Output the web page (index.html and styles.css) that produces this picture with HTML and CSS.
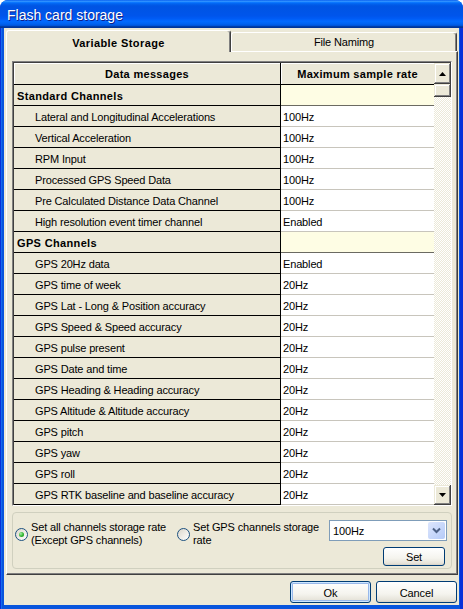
FILE: index.html
```html
<!DOCTYPE html>
<html>
<head>
<meta charset="utf-8">
<link rel="stylesheet" href="styles.css">
</head>
<body>
<div class="window">
  <div class="titlebar"><span>Flash card storage</span></div>
  <div class="client">
    <div class="tabs">
      <div class="tab active">Variable Storage</div>
      <div class="tab">File Namimg</div>
    </div>
    <div class="panel">
      <div class="grid">
        <div class="grid-inner">
          <div class="table">
            <div class="hc c1">Data messages</div><div class="hc c2">Maximum sample rate</div>
            <div class="c1 cat">Standard Channels</div><div class="catv"></div>
            <div class="c1 item">Lateral and Longitudinal Accelerations</div><div class="val">100Hz</div>
            <div class="c1 item">Vertical Acceleration</div><div class="val">100Hz</div>
            <div class="c1 item">RPM Input</div><div class="val">100Hz</div>
            <div class="c1 item">Processed GPS Speed Data</div><div class="val">100Hz</div>
            <div class="c1 item">Pre Calculated Distance Data Channel</div><div class="val">100Hz</div>
            <div class="c1 item">High resolution event timer channel</div><div class="val">Enabled</div>
            <div class="c1 cat">GPS Channels</div><div class="catv"></div>
            <div class="c1 item">GPS 20Hz data</div><div class="val">Enabled</div>
            <div class="c1 item">GPS time of week</div><div class="val">20Hz</div>
            <div class="c1 item">GPS Lat - Long &amp; Position accuracy</div><div class="val">20Hz</div>
            <div class="c1 item">GPS Speed &amp; Speed accuracy</div><div class="val">20Hz</div>
            <div class="c1 item">GPS pulse present</div><div class="val">20Hz</div>
            <div class="c1 item">GPS Date and time</div><div class="val">20Hz</div>
            <div class="c1 item">GPS Heading &amp; Heading accuracy</div><div class="val">20Hz</div>
            <div class="c1 item">GPS Altitude &amp; Altitude accuracy</div><div class="val">20Hz</div>
            <div class="c1 item">GPS pitch</div><div class="val">20Hz</div>
            <div class="c1 item">GPS yaw</div><div class="val">20Hz</div>
            <div class="c1 item">GPS roll</div><div class="val">20Hz</div>
            <div class="c1 item">GPS RTK baseline and baseline accuracy</div><div class="val">20Hz</div>
          </div>
          <div class="scrollbar">
            <div class="sbtn up"><svg width="7" height="4" viewBox="0 0 7 4"><path d="M3.5 0 L7 4 L0 4 Z" fill="#000"/></svg></div>
            <div class="thumb"></div>
            <div class="track"></div>
            <div class="sbtn down"><svg width="7" height="4" viewBox="0 0 7 4"><path d="M0 0 L7 0 L3.5 4 Z" fill="#000"/></svg></div>
          </div>
        </div>
      </div>
      <div class="group">
        <div class="option opt1">
          <span class="radio on"></span>
          <span class="label">Set all channels storage rate<br>(Except GPS channels)</span>
        </div>
        <div class="option opt2">
          <span class="radio"></span>
          <span class="label">Set GPS channels storage<br>rate</span>
        </div>
        <div class="rightcol">
          <div class="combo">
            <span class="combo-text">100Hz</span>
            <span class="dd"><svg width="9" height="7" viewBox="0 0 9 7"><path d="M1 1.5 L4.5 5 L8 1.5" fill="none" stroke="#4D6185" stroke-width="2"/></svg></span>
          </div>
          <div class="btn setbtn">Set</div>
        </div>
      </div>
    </div>
    <div class="buttons">
      <div class="btn okbtn">Ok</div>
      <div class="btn">Cancel</div>
    </div>
  </div>
</div>
</body>
</html>
```

FILE: styles.css
```css
html, body {
  margin: 0;
  padding: 0;
  background: #ffffff;
}
body {
  font-family: "Liberation Sans", Arial, sans-serif;
  font-size: 11px;
  color: #000;
  letter-spacing: -0.15px;
}
.window {
  width: 463px;
  height: 609px;
  box-sizing: border-box;
  display: flex;
  flex-direction: column;
  border-radius: 8px 8px 0 0;
  overflow: hidden;
  background: linear-gradient(to right, #0831D9 0, #0831D9 1px, #166AEE 1px, #166AEE 2px, #0855DD 2px, #0855DD 460px, #0831D9 460px);
}
.titlebar {
  height: 28px;
  flex: none;
  box-sizing: border-box;
  padding: 1px 0 0 7px;
  display: flex;
  align-items: center;
  color: #fff;
  font-size: 14px;
  letter-spacing: 0;
  text-shadow: 1px 1px 0 #0F1F89;
  background: linear-gradient(to bottom, #0058EE 0%, #3593FF 4%, #288EFF 6%, #127DFF 8%, #036FFC 10%, #0262EE 14%, #0057E5 20%, #0054E3 24%, #0055EB 56%, #005BF5 66%, #026AFE 76%, #0062EF 86%, #0052D6 92%, #0040AB 94%, #003092 100%);
}
.client {
  flex: 1;
  margin: 0 4px 4px 4px;
  background: #ECE9D8;
  display: flex;
  flex-direction: column;
  padding: 2px 1px 0 2px;
}
.tabs {
  height: 21px;
  display: flex;
  align-items: flex-end;
  position: relative;
  z-index: 2;
}
.tab {
  box-sizing: border-box;
  height: 19px;
  width: 226px;
  border: 1px solid #fff;
  border-right-color: #404040;
  border-bottom: none;
  border-radius: 3px 3px 0 0;
  box-shadow: inset -1px 0 0 #808080;
  text-align: center;
  line-height: 18px;
  background: #ECE9D8;
}
.tab.active {
  width: 225px;
  height: 22px;
  margin-bottom: -1px;
  font-weight: bold;
  line-height: 24px;
  letter-spacing: 0.4px;
}
.panel {
  box-sizing: border-box;
  height: 524px;
  border: 1px solid #fff;
  border-right-color: #404040;
  border-bottom-color: #404040;
  box-shadow: inset -1px -1px 0 #808080;
  padding: 9px 5px 5px 5px;
  display: flex;
  flex-direction: column;
}
.grid {
  box-sizing: border-box;
  height: 445px;
  border: 1px solid #808080;
  border-right-color: #fff;
  border-bottom-color: #fff;
}
.grid-inner {
  height: 100%;
  box-sizing: border-box;
  border-top: 1px solid #404040;
  border-left: 1px solid #404040;
  display: flex;
  background: #fff;
}
.table {
  display: grid;
  grid-template-columns: 267px 153px;
  grid-template-rows: 22px;
  grid-auto-rows: 21px;
  align-content: start;
}
.table > div {
  box-sizing: border-box;
  white-space: nowrap;
  overflow: hidden;
  line-height: 22px;
}
.c1 {
  background: #ECE9D8;
  border-right: 1px solid #000;
  border-bottom: 1px solid #000;
}
.hc {
  background: #ECE9D8;
  font-weight: bold;
  text-align: center;
  letter-spacing: 0.3px;
  border-bottom: 1px solid #000;
  box-shadow: inset 1px 1px 0 #fff;
}
.cat {
  font-weight: bold;
  letter-spacing: 0.35px;
  padding-left: 3px;
}
.item {
  padding-left: 21px;
}
.val {
  background: #fff;
  border-bottom: 1px solid #C8C5BC;
  padding-left: 2px;
}
.catv {
  background: #FEFDE4;
  border-bottom: 1px solid #6B6A62;
}
.scrollbar {
  width: 17px;
  display: flex;
  flex-direction: column;
  background: repeating-conic-gradient(#ffffff 0 25%, #ECE9D8 0 50%) 0 0 / 2px 2px;
}
.sbtn, .thumb {
  box-sizing: border-box;
  background: #ECE9D8;
  box-shadow: inset -1px -1px 0 #404040, inset 1px 1px 0 #ECE9D8, inset -2px -2px 0 #808080, inset 2px 2px 0 #ffffff;
  display: flex;
  align-items: center;
  justify-content: center;
}
.sbtn.up {
  height: 21px;
}
.thumb {
  height: 13px;
}
.track {
  flex: 1;
}
.sbtn.down {
  height: 20px;
}
.group {
  margin-top: 6px;
  height: 57px;
  box-sizing: border-box;
  border: 1px solid #D0D0BF;
  border-radius: 4px;
  padding: 7px 4px 0 2px;
  display: flex;
  align-items: flex-start;
}
.option {
  display: flex;
  align-items: center;
  height: 27px;
  gap: 3px;
}
.opt1 {
  width: 162px;
}
.opt2 {
  width: 152px;
}
.label {
  line-height: 13px;
  white-space: nowrap;
  padding-top: 1px;
}
.radio {
  width: 13px;
  height: 13px;
  flex: none;
  box-sizing: border-box;
  border-radius: 50%;
  border: 1px solid #1C5180;
  background: linear-gradient(135deg, #DCD7CB, #ffffff);
  position: relative;
  margin-top: 1px;
}
.radio.on::after {
  content: "";
  position: absolute;
  left: 3px;
  top: 3px;
  width: 5px;
  height: 5px;
  border-radius: 50%;
  background: radial-gradient(circle at 35% 35%, #A8F0A8, #2EB42E 55%, #1A8A1A);
}
.rightcol {
  margin-left: auto;
  width: 118px;
  display: flex;
  flex-direction: column;
  align-items: flex-end;
}
.combo {
  width: 118px;
  height: 21px;
  box-sizing: border-box;
  border: 1px solid #7F9DB9;
  background: #fff;
  display: flex;
  align-items: center;
}
.combo-text {
  padding-left: 3px;
  padding-top: 1px;
  flex: 1;
}
.dd {
  width: 17px;
  height: 17px;
  margin: 1px;
  border-radius: 2px;
  background: linear-gradient(135deg, #DDE6FD, #B5CBF8);
  display: flex;
  align-items: center;
  justify-content: center;
}
.btn {
  box-sizing: border-box;
  border: 1px solid #003C74;
  border-radius: 3px;
  background: linear-gradient(to bottom, #FFFFFF 0%, #F5F4EE 60%, #E6E3D9 90%, #D6D0C5 100%);
  display: flex;
  align-items: center;
  justify-content: center;
  width: 81px;
  height: 22px;
  padding-top: 1px;
}
.setbtn {
  width: 62px;
  height: 19px;
  margin-top: 6px;
  margin-right: 2px;
}
.buttons {
  display: flex;
  justify-content: flex-end;
  gap: 5px;
  padding: 6px 1px 0 0;
}
.okbtn {
  box-shadow: inset 0 0 0 1px #CEE7FF, inset 0 0 0 2px #98B8EA;
}
```
